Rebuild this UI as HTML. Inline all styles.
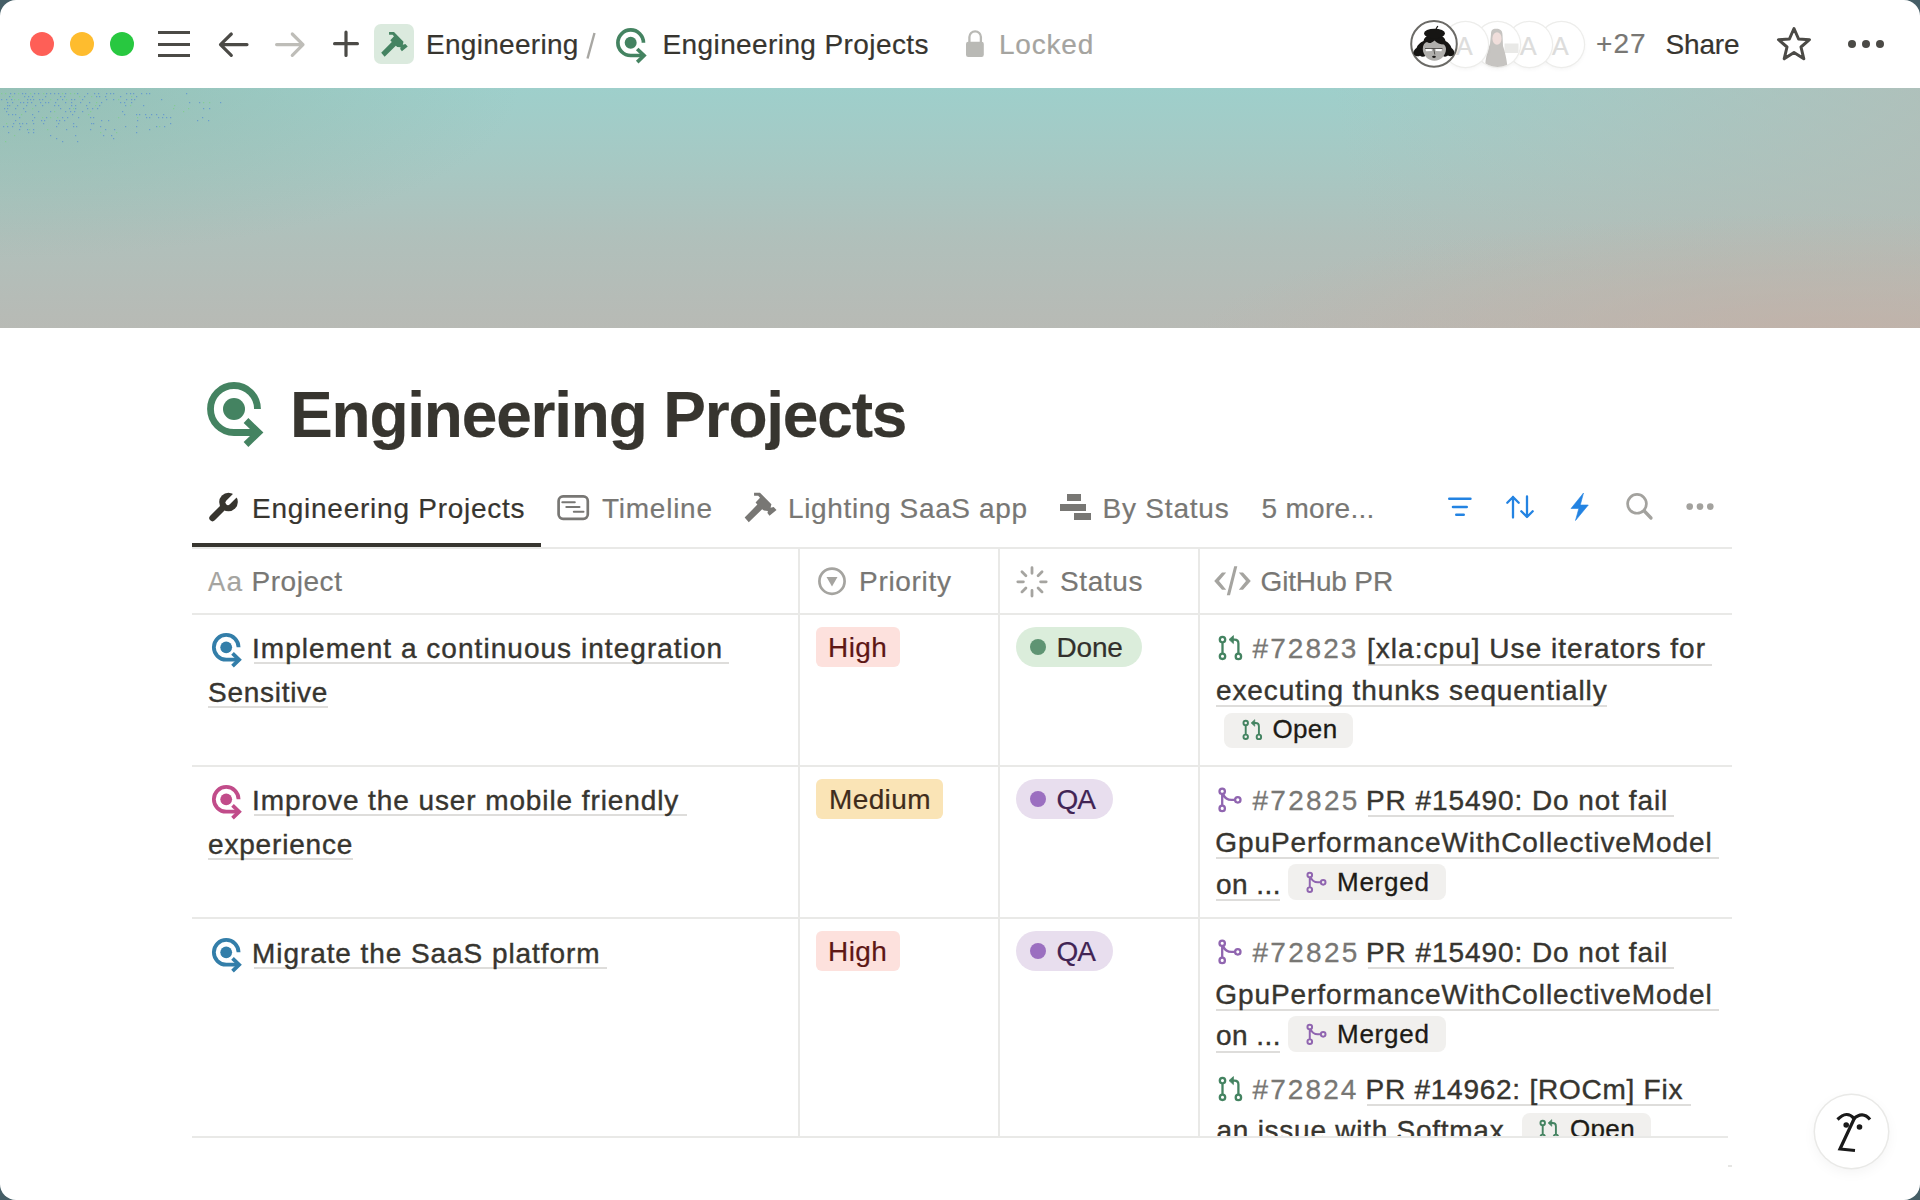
<!DOCTYPE html>
<html><head><meta charset="utf-8">
<style>
html,body{margin:0;padding:0;width:1920px;height:1200px;overflow:hidden;background:#455e66;}
body{font-family:"Liberation Sans",sans-serif;color:#37352f;}
.win{position:absolute;left:0;top:0;width:1920px;height:1200px;border-radius:16px;background:#fff;overflow:hidden;}
.a{position:absolute;}
.t{position:absolute;white-space:nowrap;font-size:28px;line-height:28px;-webkit-text-stroke:0.2px currentColor;}
svg{position:absolute;overflow:visible;}
.cover{position:absolute;left:0;top:88px;width:1920px;height:240px;
 background:
  radial-gradient(ellipse 650px 130px at 1840px 255px, rgba(196,176,166,0.85), rgba(196,176,166,0) 100%),
  radial-gradient(ellipse 520px 170px at 0px 0px, rgba(140,178,162,0.5), rgba(140,178,162,0) 100%),
  linear-gradient(260deg, rgba(180,188,182,0.75) 0%, rgba(180,188,182,0) 30%),
  linear-gradient(180deg,#9ecfcb 0%,#a6c9c4 30%,#b0c0bb 62%,#b8bab5 100%);}
.gl{position:absolute;background:#e9e9e7;}
.ul{position:absolute;height:2px;background:#dedddb;z-index:0;}
.row{z-index:1;}
.tag{position:absolute;height:40px;border-radius:6px;}
.pill{position:absolute;height:40px;border-radius:20px;}
.dot{position:absolute;width:16px;height:16px;border-radius:8px;}
.badge{position:absolute;height:36px;border-radius:8px;background:#f1f0ee;}
.row{font-size:28px;letter-spacing:0.9px;color:#37352f;-webkit-text-stroke:0.4px #37352f;}
.gray{color:#787774;}
</style></head>
<body><div class="win">

<!-- top bar -->
<div class="a" style="left:30px;top:32px;width:24px;height:24px;border-radius:12px;background:#fe5f57"></div>
<div class="a" style="left:70px;top:32px;width:24px;height:24px;border-radius:12px;background:#febc2e"></div>
<div class="a" style="left:110px;top:32px;width:24px;height:24px;border-radius:12px;background:#28c840"></div>

<div class="a" style="left:158px;top:31px;width:32px;height:3px;background:#4b4a46"></div>
<div class="a" style="left:158px;top:42.5px;width:32px;height:3px;background:#4b4a46"></div>
<div class="a" style="left:158px;top:54px;width:32px;height:3px;background:#4b4a46"></div>

<svg width="1920" height="88" style="left:0;top:0">
 <g fill="none" stroke-width="3.2" stroke-linecap="round" stroke-linejoin="round">
  <path d="M220.5 44.6 L247 44.6 M231.3 34 L220.5 44.6 L231.3 55.3" stroke="#4b4a46"/>
  <path d="M276.6 44.6 L303 44.6 M292.3 34 L303 44.6 L292.3 55.3" stroke="#bebdb8"/>
  <path d="M346 32.2 L346 55.4 M334.6 43.7 L357.4 43.7" stroke="#4b4a46"/>
 </g>
</svg>
<div class="a" style="left:374px;top:24px;width:40px;height:40px;border-radius:7px;background:#dbeade"></div>
<svg width="40" height="40" viewBox="0 0 40 40" style="left:374px;top:24px">
 <path d="M15.05 8.08 L20 8.08 L29.5 17.8 L28.8 20.7 L31.4 20 L33.75 22.4 L27.9 27.3 L26.2 25.1 L26.6 23.3 L23.3 22.9 L21.8 21.8 L10.65 32.65 L7.2 28.8 L17.8 18 L16.3 16.3 L20 12.3 L18.5 10.65 L15.05 10.65 Z" fill="#448361"/>
</svg>
<div class="t" style="left:426px;top:31px;letter-spacing:0.3px">Engineering</div>
<svg width="20" height="40" viewBox="0 0 20 40" style="left:580px;top:25px"><path d="M14.5 8 L7.5 33.5" stroke="#a8a7a3" stroke-width="2.4"/></svg>
<svg width="31" height="36" viewBox="0 0 57 66" style="left:616px;top:28px">
 <g fill="none" stroke="#448361" stroke-width="6.8">
  <path d="M50.5 27 A23.5 23.5 0 1 0 27 50.5 L51 50.5"/>
  <path d="M39 38.5 L51.5 50.5 L39 62.5" stroke-linejoin="miter"/>
 </g>
 <circle cx="27" cy="27" r="11" fill="#448361"/>
</svg>
<div class="t" style="left:662.5px;top:31px;letter-spacing:0.4px">Engineering Projects</div>
<svg width="20" height="28" viewBox="0 0 20 28" style="left:965px;top:30px">
 <path d="M4.4 12.5 V7.05 A5.75 5.75 0 0 1 15.9 7.05 V12.5" fill="none" stroke="#b9b9b5" stroke-width="2.3"/>
 <rect x="1" y="11.7" width="17.8" height="15.3" rx="2.2" fill="#b9b9b5"/>
</svg>
<div class="t" style="left:999px;top:31px;color:#a5a4a0;letter-spacing:0.8px">Locked</div>


<!-- avatars -->
<div class="a" style="left:1539px;top:21.5px;width:45px;height:45px;border-radius:50%;background:#fff;box-shadow:0 0 0 1.2px #ededeb,0 2px 5px rgba(0,0,0,0.05)"></div>
<div class="t" style="left:1552px;top:32px;font-size:25px;color:#dddddc">A</div>
<div class="a" style="left:1507px;top:21.5px;width:45px;height:45px;border-radius:50%;background:#fff;box-shadow:0 0 0 1.2px #ededeb,0 2px 5px rgba(0,0,0,0.05)"></div>
<div class="t" style="left:1520px;top:32px;font-size:25px;color:#dddddc">A</div>
<div class="a" style="left:1475px;top:21.5px;width:45px;height:45px;border-radius:50%;background:#fff;box-shadow:0 0 0 1.2px #ededeb,0 2px 5px rgba(0,0,0,0.05);overflow:hidden">
 <svg width="45" height="45" viewBox="0 0 45 45" style="left:0;top:0">
  <rect x="29.5" y="21.5" width="14" height="9.5" fill="#e9e9e7"/>
  <path d="M16 12 C16 7 19 6.8 21.5 6.8 C24.5 6.8 27.5 8 27.5 13 L28 24 C30 30 31.5 36 32.5 45 L10 45 C10.5 36 12.5 28 15 22 Z" fill="#c6c4c1"/>
  <ellipse cx="22" cy="16.5" rx="4.6" ry="6.2" fill="#f0dedb"/>
 </svg>
</div>
<div class="a" style="left:1443px;top:21.5px;width:45px;height:45px;border-radius:50%;background:#fff;box-shadow:0 0 0 1.2px #ededeb,0 2px 5px rgba(0,0,0,0.05)"></div>
<div class="t" style="left:1456px;top:32px;font-size:25px;color:#dddddc">A</div>
<svg width="50" height="50" viewBox="0 0 50 50" style="left:1409px;top:18.5px">
 <circle cx="25" cy="24.9" r="22.8" fill="#fff" stroke="#6b6a66" stroke-width="2"/>
 <path d="M5 35.5 C3.5 33 5.5 30.5 7.5 29 C8.5 26 11 23.5 14.5 22 C15 19 17 17.5 19 17 L32 17 C34.5 17.5 36 19.5 36.5 22 C39.5 23.5 41.5 26 42.5 29 C45 30.5 46 33.5 44.5 36 C43 37.5 40.5 37.5 39 36.5 C37.5 38 34.5 38 33 36.5 L17 36.5 C15 38 12.5 38 11 36.8 C9 37.8 6.5 37.5 5 35.5 Z" fill="#161513"/>
 <ellipse cx="25.5" cy="14.5" rx="10.5" ry="4.8" fill="#161513"/>
 <path d="M27 10 L28.8 7" stroke="#161513" stroke-width="1.3"/>
 <path d="M13.8 30 C13.8 26 15.5 23.5 18 23 C20 25 23 24 25.5 21.5 C28 24 31 25.5 35 25.5 C36.5 27 37 28.5 37 30 C37 36 32 41.8 25.5 41.8 C19 41.8 13.8 36 13.8 30 Z" fill="#b0afac"/>
 <path d="M16.5 30 L22.5 29.5 L23 32 L17 32.3 Z M26.5 29.5 L33 30 L32.5 32.3 L26.7 32 Z" fill="#fff"/>
 <path d="M16 29.5 L33.5 29.5 M24.8 30 L25.8 35.5" stroke="#2b2a27" stroke-width="0.7" fill="none"/>
 <ellipse cx="25" cy="37.8" rx="1.9" ry="1.1" fill="#161513"/>
</svg>
<div class="t gray" style="left:1596px;top:30px;letter-spacing:1.1px">+27</div>
<div class="t" style="left:1665.5px;top:30.5px;letter-spacing:-0.15px">Share</div>
<svg width="40" height="40" viewBox="0 0 40 40" style="left:1774px;top:24px">
 <path d="M20 4.5 L24.6 15 L35.5 15.7 L27 23 L29.8 34.8 L20 28.5 L10.2 34.8 L13 23 L4.5 15.7 L15.4 15 Z" fill="none" stroke="#4b4a46" stroke-width="3" stroke-linejoin="round"/>
</svg>
<div class="a" style="left:1847.5px;top:40px;width:8px;height:8px;border-radius:4px;background:#4b4a46"></div>
<div class="a" style="left:1861.5px;top:40px;width:8px;height:8px;border-radius:4px;background:#4b4a46"></div>
<div class="a" style="left:1875.5px;top:40px;width:8px;height:8px;border-radius:4px;background:#4b4a46"></div>

<!-- cover -->
<div class="cover"></div>
<!-- dots --><svg width="260" height="70" viewBox="0 0 260 70" style="left:0;top:88px;opacity:0.8"><rect x="1" y="5" width="1.2" height="1.2" fill="#7fcf8c"/><rect x="5" y="5" width="1.2" height="1.2" fill="#7fcf8c"/><rect x="10" y="5" width="1.2" height="1.2" fill="#5d92d2"/><rect x="14" y="5" width="1.2" height="1.2" fill="#5d92d2"/><rect x="18" y="5" width="1.2" height="1.2" fill="#7fcf8c"/><rect x="22" y="5" width="1.2" height="1.2" fill="#5d92d2"/><rect x="25" y="5" width="1.2" height="1.2" fill="#5d92d2"/><rect x="30" y="5" width="1.2" height="1.2" fill="#7fcf8c"/><rect x="34" y="5" width="1.2" height="1.2" fill="#5d92d2"/><rect x="38" y="5" width="1.2" height="1.2" fill="#5d92d2"/><rect x="43" y="5" width="1.2" height="1.2" fill="#7fcf8c"/><rect x="46" y="5" width="1.2" height="1.2" fill="#5d92d2"/><rect x="50" y="5" width="1.2" height="1.2" fill="#5d92d2"/><rect x="54" y="5" width="1.2" height="1.2" fill="#5d92d2"/><rect x="58" y="5" width="1.2" height="1.2" fill="#5d92d2"/><rect x="62" y="5" width="1.2" height="1.2" fill="#7fcf8c"/><rect x="65" y="5" width="1.2" height="1.2" fill="#5d92d2"/><rect x="70" y="5" width="1.2" height="1.2" fill="#7fcf8c"/><rect x="74" y="5" width="1.2" height="1.2" fill="#7fcf8c"/><rect x="77" y="5" width="1.2" height="1.2" fill="#5d92d2"/><rect x="87" y="5" width="1.2" height="1.2" fill="#5d92d2"/><rect x="94" y="5" width="1.2" height="1.2" fill="#5d92d2"/><rect x="98" y="5" width="1.2" height="1.2" fill="#5d92d2"/><rect x="106" y="5" width="1.2" height="1.2" fill="#5d92d2"/><rect x="110" y="5" width="1.2" height="1.2" fill="#5d92d2"/><rect x="113" y="5" width="1.2" height="1.2" fill="#5d92d2"/><rect x="126" y="5" width="1.2" height="1.2" fill="#5d92d2"/><rect x="130" y="5" width="1.2" height="1.2" fill="#5d92d2"/><rect x="133" y="5" width="1.2" height="1.2" fill="#5d92d2"/><rect x="141" y="5" width="1.2" height="1.2" fill="#5d92d2"/><rect x="146" y="5" width="1.2" height="1.2" fill="#5d92d2"/><rect x="149" y="5" width="1.2" height="1.2" fill="#5d92d2"/><rect x="186" y="5" width="1.2" height="1.2" fill="#5d92d2"/><rect x="9" y="8" width="1.2" height="1.2" fill="#5d92d2"/><rect x="12" y="8" width="1.2" height="1.2" fill="#7fcf8c"/><rect x="24" y="8" width="1.2" height="1.2" fill="#5d92d2"/><rect x="28" y="8" width="1.2" height="1.2" fill="#5d92d2"/><rect x="32" y="8" width="1.2" height="1.2" fill="#5d92d2"/><rect x="45" y="8" width="1.2" height="1.2" fill="#5d92d2"/><rect x="60" y="8" width="1.2" height="1.2" fill="#5d92d2"/><rect x="64" y="8" width="1.2" height="1.2" fill="#5d92d2"/><rect x="79" y="8" width="1.2" height="1.2" fill="#7fcf8c"/><rect x="84" y="8" width="1.2" height="1.2" fill="#5d92d2"/><rect x="91" y="8" width="1.2" height="1.2" fill="#7fcf8c"/><rect x="96" y="8" width="1.2" height="1.2" fill="#5d92d2"/><rect x="99" y="8" width="1.2" height="1.2" fill="#5d92d2"/><rect x="105" y="8" width="1.2" height="1.2" fill="#5d92d2"/><rect x="120" y="8" width="1.2" height="1.2" fill="#5d92d2"/><rect x="131" y="8" width="1.2" height="1.2" fill="#7fcf8c"/><rect x="136" y="8" width="1.2" height="1.2" fill="#5d92d2"/><rect x="1" y="11" width="1.2" height="1.2" fill="#5d92d2"/><rect x="6" y="11" width="1.2" height="1.2" fill="#5d92d2"/><rect x="11" y="11" width="1.2" height="1.2" fill="#5d92d2"/><rect x="14" y="11" width="1.2" height="1.2" fill="#7fcf8c"/><rect x="18" y="11" width="1.2" height="1.2" fill="#7fcf8c"/><rect x="27" y="11" width="1.2" height="1.2" fill="#5d92d2"/><rect x="30" y="11" width="1.2" height="1.2" fill="#5d92d2"/><rect x="33" y="11" width="1.2" height="1.2" fill="#5d92d2"/><rect x="39" y="11" width="1.2" height="1.2" fill="#5d92d2"/><rect x="42" y="11" width="1.2" height="1.2" fill="#5d92d2"/><rect x="50" y="11" width="1.2" height="1.2" fill="#7fcf8c"/><rect x="57" y="11" width="1.2" height="1.2" fill="#5d92d2"/><rect x="62" y="11" width="1.2" height="1.2" fill="#5d92d2"/><rect x="66" y="11" width="1.2" height="1.2" fill="#7fcf8c"/><rect x="71" y="11" width="1.2" height="1.2" fill="#5d92d2"/><rect x="74" y="11" width="1.2" height="1.2" fill="#5d92d2"/><rect x="82" y="11" width="1.2" height="1.2" fill="#5d92d2"/><rect x="106" y="11" width="1.2" height="1.2" fill="#5d92d2"/><rect x="113" y="11" width="1.2" height="1.2" fill="#5d92d2"/><rect x="118" y="11" width="1.2" height="1.2" fill="#7fcf8c"/><rect x="126" y="11" width="1.2" height="1.2" fill="#5d92d2"/><rect x="131" y="11" width="1.2" height="1.2" fill="#5d92d2"/><rect x="134" y="11" width="1.2" height="1.2" fill="#5d92d2"/><rect x="161" y="11" width="1.2" height="1.2" fill="#5d92d2"/><rect x="7" y="14" width="1.2" height="1.2" fill="#5d92d2"/><rect x="12" y="14" width="1.2" height="1.2" fill="#5d92d2"/><rect x="20" y="14" width="1.2" height="1.2" fill="#5d92d2"/><rect x="23" y="14" width="1.2" height="1.2" fill="#5d92d2"/><rect x="27" y="14" width="1.2" height="1.2" fill="#5d92d2"/><rect x="31" y="14" width="1.2" height="1.2" fill="#5d92d2"/><rect x="40" y="14" width="1.2" height="1.2" fill="#5d92d2"/><rect x="45" y="14" width="1.2" height="1.2" fill="#5d92d2"/><rect x="48" y="14" width="1.2" height="1.2" fill="#5d92d2"/><rect x="55" y="14" width="1.2" height="1.2" fill="#5d92d2"/><rect x="65" y="14" width="1.2" height="1.2" fill="#5d92d2"/><rect x="71" y="14" width="1.2" height="1.2" fill="#5d92d2"/><rect x="80" y="14" width="1.2" height="1.2" fill="#5d92d2"/><rect x="89" y="14" width="1.2" height="1.2" fill="#5d92d2"/><rect x="96" y="14" width="1.2" height="1.2" fill="#7fcf8c"/><rect x="101" y="14" width="1.2" height="1.2" fill="#5d92d2"/><rect x="120" y="14" width="1.2" height="1.2" fill="#5d92d2"/><rect x="124" y="14" width="1.2" height="1.2" fill="#5d92d2"/><rect x="131" y="14" width="1.2" height="1.2" fill="#5d92d2"/><rect x="189" y="14" width="1.2" height="1.2" fill="#5d92d2"/><rect x="199" y="14" width="1.2" height="1.2" fill="#5d92d2"/><rect x="203" y="14" width="1.2" height="1.2" fill="#7fcf8c"/><rect x="209" y="14" width="1.2" height="1.2" fill="#7fcf8c"/><rect x="220" y="14" width="1.2" height="1.2" fill="#5d92d2"/><rect x="7" y="17" width="1.2" height="1.2" fill="#5d92d2"/><rect x="9" y="17" width="1.2" height="1.2" fill="#5d92d2"/><rect x="17" y="17" width="1.2" height="1.2" fill="#5d92d2"/><rect x="26" y="17" width="1.2" height="1.2" fill="#5d92d2"/><rect x="35" y="17" width="1.2" height="1.2" fill="#5d92d2"/><rect x="42" y="17" width="1.2" height="1.2" fill="#5d92d2"/><rect x="54" y="17" width="1.2" height="1.2" fill="#5d92d2"/><rect x="58" y="17" width="1.2" height="1.2" fill="#5d92d2"/><rect x="71" y="17" width="1.2" height="1.2" fill="#5d92d2"/><rect x="75" y="17" width="1.2" height="1.2" fill="#5d92d2"/><rect x="86" y="17" width="1.2" height="1.2" fill="#5d92d2"/><rect x="95" y="17" width="1.2" height="1.2" fill="#7fcf8c"/><rect x="99" y="17" width="1.2" height="1.2" fill="#5d92d2"/><rect x="125" y="17" width="1.2" height="1.2" fill="#5d92d2"/><rect x="130" y="17" width="1.2" height="1.2" fill="#7fcf8c"/><rect x="143" y="17" width="1.2" height="1.2" fill="#5d92d2"/><rect x="174" y="17" width="1.2" height="1.2" fill="#7fcf8c"/><rect x="4" y="20" width="1.2" height="1.2" fill="#5d92d2"/><rect x="7" y="20" width="1.2" height="1.2" fill="#5d92d2"/><rect x="15" y="20" width="1.2" height="1.2" fill="#5d92d2"/><rect x="23" y="20" width="1.2" height="1.2" fill="#5d92d2"/><rect x="32" y="20" width="1.2" height="1.2" fill="#7fcf8c"/><rect x="60" y="20" width="1.2" height="1.2" fill="#5d92d2"/><rect x="69" y="20" width="1.2" height="1.2" fill="#5d92d2"/><rect x="73" y="20" width="1.2" height="1.2" fill="#7fcf8c"/><rect x="75" y="20" width="1.2" height="1.2" fill="#5d92d2"/><rect x="87" y="20" width="1.2" height="1.2" fill="#5d92d2"/><rect x="92" y="20" width="1.2" height="1.2" fill="#5d92d2"/><rect x="97" y="20" width="1.2" height="1.2" fill="#5d92d2"/><rect x="173" y="20" width="1.2" height="1.2" fill="#7fcf8c"/><rect x="188" y="20" width="1.2" height="1.2" fill="#7fcf8c"/><rect x="203" y="20" width="1.2" height="1.2" fill="#5d92d2"/><rect x="209" y="20" width="1.2" height="1.2" fill="#5d92d2"/><rect x="6" y="23" width="1.2" height="1.2" fill="#5d92d2"/><rect x="25" y="23" width="1.2" height="1.2" fill="#5d92d2"/><rect x="38" y="23" width="1.2" height="1.2" fill="#5d92d2"/><rect x="50" y="23" width="1.2" height="1.2" fill="#5d92d2"/><rect x="54" y="23" width="1.2" height="1.2" fill="#7fcf8c"/><rect x="65" y="23" width="1.2" height="1.2" fill="#5d92d2"/><rect x="70" y="23" width="1.2" height="1.2" fill="#5d92d2"/><rect x="74" y="23" width="1.2" height="1.2" fill="#5d92d2"/><rect x="82" y="23" width="1.2" height="1.2" fill="#5d92d2"/><rect x="90" y="23" width="1.2" height="1.2" fill="#7fcf8c"/><rect x="122" y="23" width="1.2" height="1.2" fill="#5d92d2"/><rect x="183" y="23" width="1.2" height="1.2" fill="#7fcf8c"/><rect x="8" y="26" width="1.2" height="1.2" fill="#5d92d2"/><rect x="12" y="26" width="1.2" height="1.2" fill="#5d92d2"/><rect x="15" y="26" width="1.2" height="1.2" fill="#5d92d2"/><rect x="21" y="26" width="1.2" height="1.2" fill="#7fcf8c"/><rect x="32" y="26" width="1.2" height="1.2" fill="#5d92d2"/><rect x="72" y="26" width="1.2" height="1.2" fill="#5d92d2"/><rect x="88" y="26" width="1.2" height="1.2" fill="#7fcf8c"/><rect x="124" y="26" width="1.2" height="1.2" fill="#5d92d2"/><rect x="136" y="26" width="1.2" height="1.2" fill="#5d92d2"/><rect x="139" y="26" width="1.2" height="1.2" fill="#5d92d2"/><rect x="145" y="26" width="1.2" height="1.2" fill="#5d92d2"/><rect x="151" y="26" width="1.2" height="1.2" fill="#5d92d2"/><rect x="156" y="26" width="1.2" height="1.2" fill="#5d92d2"/><rect x="163" y="26" width="1.2" height="1.2" fill="#5d92d2"/><rect x="19" y="29" width="1.2" height="1.2" fill="#5d92d2"/><rect x="34" y="29" width="1.2" height="1.2" fill="#5d92d2"/><rect x="42" y="29" width="1.2" height="1.2" fill="#7fcf8c"/><rect x="46" y="29" width="1.2" height="1.2" fill="#5d92d2"/><rect x="50" y="29" width="1.2" height="1.2" fill="#7fcf8c"/><rect x="57" y="29" width="1.2" height="1.2" fill="#7fcf8c"/><rect x="62" y="29" width="1.2" height="1.2" fill="#5d92d2"/><rect x="67" y="29" width="1.2" height="1.2" fill="#5d92d2"/><rect x="78" y="29" width="1.2" height="1.2" fill="#5d92d2"/><rect x="90" y="29" width="1.2" height="1.2" fill="#5d92d2"/><rect x="93" y="29" width="1.2" height="1.2" fill="#5d92d2"/><rect x="118" y="29" width="1.2" height="1.2" fill="#7fcf8c"/><rect x="137" y="29" width="1.2" height="1.2" fill="#7fcf8c"/><rect x="146" y="29" width="1.2" height="1.2" fill="#5d92d2"/><rect x="149" y="29" width="1.2" height="1.2" fill="#5d92d2"/><rect x="158" y="29" width="1.2" height="1.2" fill="#5d92d2"/><rect x="162" y="29" width="1.2" height="1.2" fill="#5d92d2"/><rect x="166" y="29" width="1.2" height="1.2" fill="#5d92d2"/><rect x="170" y="29" width="1.2" height="1.2" fill="#5d92d2"/><rect x="202" y="29" width="1.2" height="1.2" fill="#5d92d2"/><rect x="15" y="32" width="1.2" height="1.2" fill="#5d92d2"/><rect x="32" y="32" width="1.2" height="1.2" fill="#5d92d2"/><rect x="41" y="32" width="1.2" height="1.2" fill="#5d92d2"/><rect x="44" y="32" width="1.2" height="1.2" fill="#5d92d2"/><rect x="56" y="32" width="1.2" height="1.2" fill="#5d92d2"/><rect x="59" y="32" width="1.2" height="1.2" fill="#5d92d2"/><rect x="64" y="32" width="1.2" height="1.2" fill="#5d92d2"/><rect x="101" y="32" width="1.2" height="1.2" fill="#5d92d2"/><rect x="108" y="32" width="1.2" height="1.2" fill="#5d92d2"/><rect x="137" y="32" width="1.2" height="1.2" fill="#5d92d2"/><rect x="197" y="32" width="1.2" height="1.2" fill="#5d92d2"/><rect x="208" y="32" width="1.2" height="1.2" fill="#5d92d2"/><rect x="6" y="35" width="1.2" height="1.2" fill="#7fcf8c"/><rect x="13" y="35" width="1.2" height="1.2" fill="#5d92d2"/><rect x="19" y="35" width="1.2" height="1.2" fill="#5d92d2"/><rect x="22" y="35" width="1.2" height="1.2" fill="#5d92d2"/><rect x="26" y="35" width="1.2" height="1.2" fill="#5d92d2"/><rect x="33" y="35" width="1.2" height="1.2" fill="#5d92d2"/><rect x="43" y="35" width="1.2" height="1.2" fill="#5d92d2"/><rect x="58" y="35" width="1.2" height="1.2" fill="#5d92d2"/><rect x="73" y="35" width="1.2" height="1.2" fill="#5d92d2"/><rect x="91" y="35" width="1.2" height="1.2" fill="#5d92d2"/><rect x="93" y="35" width="1.2" height="1.2" fill="#5d92d2"/><rect x="170" y="35" width="1.2" height="1.2" fill="#5d92d2"/><rect x="3" y="38" width="1.2" height="1.2" fill="#5d92d2"/><rect x="7" y="38" width="1.2" height="1.2" fill="#5d92d2"/><rect x="12" y="38" width="1.2" height="1.2" fill="#5d92d2"/><rect x="20" y="38" width="1.2" height="1.2" fill="#5d92d2"/><rect x="56" y="38" width="1.2" height="1.2" fill="#5d92d2"/><rect x="73" y="38" width="1.2" height="1.2" fill="#5d92d2"/><rect x="76" y="38" width="1.2" height="1.2" fill="#5d92d2"/><rect x="100" y="38" width="1.2" height="1.2" fill="#5d92d2"/><rect x="125" y="38" width="1.2" height="1.2" fill="#5d92d2"/><rect x="136" y="38" width="1.2" height="1.2" fill="#5d92d2"/><rect x="156" y="38" width="1.2" height="1.2" fill="#5d92d2"/><rect x="159" y="38" width="1.2" height="1.2" fill="#7fcf8c"/><rect x="164" y="38" width="1.2" height="1.2" fill="#5d92d2"/><rect x="19" y="41" width="1.2" height="1.2" fill="#5d92d2"/><rect x="27" y="41" width="1.2" height="1.2" fill="#5d92d2"/><rect x="29" y="41" width="1.2" height="1.2" fill="#7fcf8c"/><rect x="33" y="41" width="1.2" height="1.2" fill="#5d92d2"/><rect x="47" y="41" width="1.2" height="1.2" fill="#7fcf8c"/><rect x="66" y="41" width="1.2" height="1.2" fill="#5d92d2"/><rect x="90" y="41" width="1.2" height="1.2" fill="#5d92d2"/><rect x="105" y="41" width="1.2" height="1.2" fill="#5d92d2"/><rect x="114" y="41" width="1.2" height="1.2" fill="#5d92d2"/><rect x="149" y="41" width="1.2" height="1.2" fill="#5d92d2"/><rect x="8" y="44" width="1.2" height="1.2" fill="#5d92d2"/><rect x="28" y="44" width="1.2" height="1.2" fill="#5d92d2"/><rect x="33" y="44" width="1.2" height="1.2" fill="#5d92d2"/><rect x="100" y="44" width="1.2" height="1.2" fill="#7fcf8c"/><rect x="116" y="44" width="1.2" height="1.2" fill="#7fcf8c"/><rect x="136" y="44" width="1.2" height="1.2" fill="#5d92d2"/><rect x="14" y="47" width="1.2" height="1.2" fill="#7fcf8c"/><rect x="50" y="47" width="1.2" height="1.2" fill="#5d92d2"/><rect x="75" y="47" width="1.2" height="1.2" fill="#5d92d2"/><rect x="103" y="47" width="1.2" height="1.2" fill="#5d92d2"/><rect x="111" y="47" width="1.2" height="1.2" fill="#5d92d2"/><rect x="56" y="50" width="1.2" height="1.2" fill="#5d92d2"/><rect x="113" y="50" width="1.2" height="1.2" fill="#5d92d2"/><rect x="5" y="53" width="1.2" height="1.2" fill="#7fcf8c"/><rect x="62" y="53" width="1.2" height="1.2" fill="#5d92d2"/><rect x="77" y="53" width="1.2" height="1.2" fill="#5d92d2"/></svg><!-- /dots -->

<!-- title -->
<svg width="57" height="66" viewBox="0 0 57 66" style="left:207px;top:382px">
 <g fill="none" stroke="#448361" stroke-width="6.8">
  <path d="M50.5 27 A23.5 23.5 0 1 0 27 50.5 L51 50.5"/>
  <path d="M39 38.5 L51.5 50.5 L39 62.5" stroke-linejoin="miter"/>
 </g>
 <circle cx="27" cy="27" r="11" fill="#448361"/>
</svg>
<div class="t" style="left:290px;top:383px;font-size:64px;line-height:64px;font-weight:bold;letter-spacing:-1.2px;color:#37352f">Engineering Projects</div>


<!-- tabs -->
<svg width="40" height="40" viewBox="0 0 40 40" style="left:204px;top:488px">
 <circle cx="24.5" cy="14" r="9.3" fill="#37352f"/>
 <path d="M24 14.5 L35 3.5" stroke="#fff" stroke-width="5.2" stroke-linecap="round"/>
 <path d="M8.5 30 L19 19.5" stroke="#37352f" stroke-width="6.4" stroke-linecap="round"/>
</svg>
<div class="t" style="left:252px;top:495px;letter-spacing:0.75px">Engineering Projects</div>
<div class="a" style="left:192px;top:543px;width:349px;height:4px;background:#37352f"></div>
<div class="a" style="left:192px;top:547px;width:1540px;height:2px;background:#e9e9e7"></div>

<svg width="40" height="40" viewBox="0 0 40 40" style="left:550px;top:488px">
 <rect x="8.6" y="8.4" width="29.2" height="22.4" rx="4.5" fill="none" stroke="#787774" stroke-width="2.7"/>
 <path d="M12.3 14.3 H24.8 M16.3 19 H29.5 M23.8 23.7 H33.5" stroke="#787774" stroke-width="2" stroke-linecap="round"/>
</svg>
<div class="t gray" style="left:602px;top:495px;letter-spacing:0.75px">Timeline</div>

<svg width="48" height="48" viewBox="0 0 40 40" style="left:736px;top:482.5px">
 <path d="M15.05 8.08 L20 8.08 L29.5 17.8 L28.8 20.7 L31.4 20 L33.75 22.4 L27.9 27.3 L26.2 25.1 L26.6 23.3 L23.3 22.9 L21.8 21.8 L10.65 32.65 L7.2 28.8 L17.8 18 L16.3 16.3 L20 12.3 L18.5 10.65 L15.05 10.65 Z" fill="#787774"/>
</svg>
<div class="t gray" style="left:788px;top:495px;letter-spacing:0.64px">Lighting SaaS app</div>

<div class="a" style="left:1067px;top:494px;width:14px;height:6.5px;background:#787774"></div>
<div class="a" style="left:1060px;top:504px;width:25.5px;height:6.5px;background:#787774"></div>
<div class="a" style="left:1074px;top:513.3px;width:16.7px;height:6.5px;background:#787774"></div>
<div class="t gray" style="left:1102.5px;top:495px;letter-spacing:0.8px">By Status</div>
<div class="t gray" style="left:1261.5px;top:495px;letter-spacing:0.3px">5 more...</div>

<svg width="300" height="40" viewBox="0 0 300 40" style="left:1440px;top:488px">
 <g stroke="#2383e2" stroke-linecap="round" fill="none">
  <path d="M9.3 10.8 H30.4 M13 19 H26.7 M16.3 26.7 H23.7" stroke-width="2.6"/>
  <path d="M73 9 V29.5 M67.3 14.8 L73 9 L78.7 14.8 M87 8.5 V29 M81.3 23.2 L87 29 L92.7 23.2" stroke-width="2.3" stroke-linejoin="round"/>
 </g>
 <path d="M143.5 5 L131 20.5 L138.8 20.5 L135.5 32.5 L148.3 17 L140.3 17 Z" fill="#2383e2" stroke="#2383e2" stroke-width="0.6" stroke-linejoin="round"/>
 <g stroke="#a3a29e" fill="none">
  <circle cx="197" cy="15.85" r="9.4" stroke-width="2.7"/>
  <path d="M204.3 23 L211 30" stroke-width="3.3" stroke-linecap="round"/>
 </g>
 <circle cx="249.7" cy="18.6" r="3.3" fill="#a3a29e"/>
 <circle cx="260" cy="18.6" r="3.3" fill="#a3a29e"/>
 <circle cx="270.3" cy="18.6" r="3.3" fill="#a3a29e"/>
</svg>


<div class="a" style="left:1728px;top:1165px;width:4px;height:2px;background:#e6e6e4"></div>
<!-- table -->
<div class="gl" style="left:798px;top:549px;width:2px;height:587px"></div>
<div class="gl" style="left:998px;top:549px;width:2px;height:587px"></div>
<div class="gl" style="left:1198px;top:549px;width:2px;height:587px"></div>
<div class="gl" style="left:192px;top:613px;width:1540px;height:2px"></div>
<div class="gl" style="left:192px;top:765px;width:1540px;height:2px"></div>
<div class="gl" style="left:192px;top:917px;width:1540px;height:2px"></div>
<div class="t" style="left:207.5px;top:568px;color:#a5a4a0;transform:scaleX(0.92);transform-origin:0 0">A</div>
<div class="t" style="left:226.5px;top:568px;color:#a5a4a0;">a</div>
<div class="t gray" style="left:251.5px;top:568px;letter-spacing:0.55px">Project</div>
<svg width="40" height="40" viewBox="0 0 40 40" style="left:812px;top:561px">
 <circle cx="20" cy="20.2" r="12.6" fill="none" stroke="#a5a4a0" stroke-width="2.7"/>
 <path d="M14.5 16 H25.5 L20 25.5 Z" fill="#a5a4a0"/>
</svg>
<div class="t gray" style="left:859px;top:568px;letter-spacing:0.7px">Priority</div>
<svg width="40" height="40" viewBox="0 0 40 40" style="left:1011px;top:561px">
 <path d="M29.60 20.85 L35.20 20.85 M27.08 26.93 L31.04 30.89 M21.00 29.45 L21.00 35.05 M14.92 26.93 L10.96 30.89 M12.40 20.85 L6.80 20.85 M14.92 14.77 L10.96 10.81 M21.00 12.25 L21.00 6.65 M27.08 14.77 L31.04 10.81" stroke="#a5a4a0" stroke-width="2.8" stroke-linecap="round"/>
</svg>
<div class="t gray" style="left:1060px;top:568px;letter-spacing:0.6px">Status</div>
<svg width="48" height="40" viewBox="0 0 48 40" style="left:1208px;top:561px">
 <path d="M14 11.5 L18.2 11.5 L11 20 L18.2 28.7 L14 28.7 L6.2 20 Z M35 11.5 L30.8 11.5 L38 20 L30.8 28.7 L35 28.7 L42.8 20 Z M26.2 5.3 L29.3 5.3 L22 34.3 L18.8 34.3 Z" fill="#a5a4a0"/>
</svg>
<div class="t gray" style="left:1260.5px;top:568px;letter-spacing:-0.15px">GitHub PR</div>
<svg width="30" height="35" viewBox="0 0 57 66" style="left:211.65px;top:633.05px">
 <g fill="none" stroke="#337ea9" stroke-width="7.2">
  <path d="M50.5 27 A23.5 23.5 0 1 0 27 50.5 L51 50.5"/>
  <path d="M39 38.5 L51.5 50.5 L39 62.5" stroke-linejoin="miter"/>
 </g>
 <circle cx="27" cy="27" r="11.2" fill="#337ea9"/>
</svg>
<div class="t row" style="left:252px;top:635px;letter-spacing:1.04px;">Implement a continuous integration</div>
<div class="ul" style="left:254px;top:662px;width:475px"></div>
<div class="t row" style="left:208px;top:678.5px;letter-spacing:0.72px;">Sensitive</div>
<div class="ul" style="left:208px;top:706px;width:120px"></div>
<div class="tag" style="left:816px;top:627px;width:84px;background:#fde1dd"></div>
<div class="t" style="left:828px;top:634px;color:#5d1715;letter-spacing:0.45px">High</div>
<div class="pill" style="left:1016px;top:627px;width:126px;background:#dbeddb"></div>
<div class="dot" style="left:1030px;top:639px;background:#5f9473"></div>
<div class="t" style="left:1056.5px;top:634px;color:#32302c;letter-spacing:-0.2px">Done</div>
<svg width="36.00" height="36.00" viewBox="0 0 36 36" style="left:1212px;top:630px">
 <g fill="none" stroke="#448361" stroke-width="2.3">
  <circle cx="10.5" cy="9.6" r="2.7"/><circle cx="10.5" cy="26.3" r="2.7"/><circle cx="26.4" cy="26.4" r="2.7"/>
  <path d="M10.5 12.3 V23.6 M26.4 23.7 V13.5 Q26.4 9.6 22.5 9.6 H19.5"/>
 </g>
 <path d="M17 9.6 L21.4 5.6 L21.4 13.6 Z" fill="#448361" stroke="#448361" stroke-width="0.8" stroke-linejoin="round"/>
</svg>
<div class="t row gray" style="left:1252.5px;top:635px;letter-spacing:2.1px;-webkit-text-stroke:0.3px #787774;">#72823</div>
<div class="t row" style="left:1367px;top:635px;letter-spacing:1.03px;">[xla:cpu] Use iterators for</div>
<div class="ul" style="left:1368px;top:663.5px;width:344px"></div>
<div class="t row" style="left:1216px;top:676.5px;letter-spacing:0.89px;">executing thunks sequentially</div>
<div class="ul" style="left:1216px;top:705px;width:391px"></div>
<div class="badge" style="left:1224px;top:712.5px;width:129px;height:35px"></div>
<svg width="29.88" height="29.88" viewBox="0 0 36 36" style="left:1236.6px;top:714.8px">
 <g fill="none" stroke="#448361" stroke-width="2.3">
  <circle cx="10.5" cy="9.6" r="2.7"/><circle cx="10.5" cy="26.3" r="2.7"/><circle cx="26.4" cy="26.4" r="2.7"/>
  <path d="M10.5 12.3 V23.6 M26.4 23.7 V13.5 Q26.4 9.6 22.5 9.6 H19.5"/>
 </g>
 <path d="M17 9.6 L21.4 5.6 L21.4 13.6 Z" fill="#448361" stroke="#448361" stroke-width="0.8" stroke-linejoin="round"/>
</svg>
<div class="t" style="left:1272.4px;top:716.2px;font-size:26px;line-height:26px;color:#1d1b16;letter-spacing:0.4px;-webkit-text-stroke:0.3px #1d1b16">Open</div>
<svg width="30" height="35" viewBox="0 0 57 66" style="left:211.65px;top:785.3px">
 <g fill="none" stroke="#c14c8a" stroke-width="7.2">
  <path d="M50.5 27 A23.5 23.5 0 1 0 27 50.5 L51 50.5"/>
  <path d="M39 38.5 L51.5 50.5 L39 62.5" stroke-linejoin="miter"/>
 </g>
 <circle cx="27" cy="27" r="11.2" fill="#c14c8a"/>
</svg>
<div class="t row" style="left:252px;top:787px;letter-spacing:0.9px;">Improve the user mobile friendly</div>
<div class="ul" style="left:254px;top:814px;width:433px"></div>
<div class="t row" style="left:208px;top:831px;letter-spacing:0.82px;">experience</div>
<div class="ul" style="left:208px;top:858px;width:145px"></div>
<div class="tag" style="left:816px;top:779px;width:127px;background:#fae4b6"></div>
<div class="t" style="left:829px;top:786px;color:#402c1b;letter-spacing:0.38px">Medium</div>
<div class="pill" style="left:1016px;top:779px;width:97px;background:#e8deee"></div>
<div class="dot" style="left:1030px;top:791px;background:#9b6fc0"></div>
<div class="t" style="left:1056.5px;top:786px;color:#412454;letter-spacing:-1px">QA</div>
<svg width="36.00" height="36.00" viewBox="0 0 36 36" style="left:1212px;top:782px">
 <g fill="none" stroke="#9065b0" stroke-width="2.3">
  <circle cx="10.2" cy="9.3" r="2.7"/><circle cx="10.2" cy="26.4" r="2.7"/><circle cx="25.8" cy="17.85" r="2.7"/>
  <path d="M10.2 12 V23.7 M11.2 12.2 Q13.5 17.85 19.5 17.85 H23.1"/>
 </g>
</svg>
<div class="t row gray" style="left:1252.5px;top:787px;letter-spacing:2.3px;-webkit-text-stroke:0.3px #787774;">#72825</div>
<div class="t row" style="left:1366px;top:787px;letter-spacing:0.93px;">PR #15490: Do not fail</div>
<div class="ul" style="left:1368px;top:815px;width:306px"></div>
<div class="t row" style="left:1215.2px;top:829px;letter-spacing:0.93px;">GpuPerformanceWithCollectiveModel</div>
<div class="ul" style="left:1216px;top:857px;width:503px"></div>
<div class="t row" style="left:1216px;top:870.5px;letter-spacing:0.45px;">on ...</div>
<div class="ul" style="left:1216px;top:899px;width:64px"></div>
<div class="badge" style="left:1288px;top:864px;width:158px;height:36px"></div>
<svg width="30.96" height="30.96" viewBox="0 0 36 36" style="left:1300.7px;top:866.5px">
 <g fill="none" stroke="#9065b0" stroke-width="2.3">
  <circle cx="10.2" cy="9.3" r="2.7"/><circle cx="10.2" cy="26.4" r="2.7"/><circle cx="25.8" cy="17.85" r="2.7"/>
  <path d="M10.2 12 V23.7 M11.2 12.2 Q13.5 17.85 19.5 17.85 H23.1"/>
 </g>
</svg>
<div class="t" style="left:1337px;top:868.5px;font-size:26px;line-height:26px;color:#1d1b16;letter-spacing:0.75px;-webkit-text-stroke:0.3px #1d1b16">Merged</div>
<div class="a" style="left:0;top:919px;width:1920px;height:217px;overflow:hidden">
<svg width="30" height="35" viewBox="0 0 57 66" style="left:211.65px;top:18.50px">
 <g fill="none" stroke="#337ea9" stroke-width="7.2">
  <path d="M50.5 27 A23.5 23.5 0 1 0 27 50.5 L51 50.5"/>
  <path d="M39 38.5 L51.5 50.5 L39 62.5" stroke-linejoin="miter"/>
 </g>
 <circle cx="27" cy="27" r="11.2" fill="#337ea9"/>
</svg>
<div class="t row" style="left:252px;top:20.50px;letter-spacing:0.93px;">Migrate the SaaS platform</div>
<div class="ul" style="left:254px;top:47.50px;width:353px"></div>
<div class="tag" style="left:816px;top:12.00px;width:84px;background:#fde1dd"></div>
<div class="t" style="left:828px;top:19.00px;color:#5d1715;letter-spacing:0.45px">High</div>
<div class="pill" style="left:1016px;top:12.00px;width:97px;background:#e8deee"></div>
<div class="dot" style="left:1030px;top:24.00px;background:#9b6fc0"></div>
<div class="t" style="left:1056.5px;top:19.00px;color:#412454;letter-spacing:-1px">QA</div>
<svg width="36.00" height="36.00" viewBox="0 0 36 36" style="left:1212px;top:15.00px">
 <g fill="none" stroke="#9065b0" stroke-width="2.3">
  <circle cx="10.2" cy="9.3" r="2.7"/><circle cx="10.2" cy="26.4" r="2.7"/><circle cx="25.8" cy="17.85" r="2.7"/>
  <path d="M10.2 12 V23.7 M11.2 12.2 Q13.5 17.85 19.5 17.85 H23.1"/>
 </g>
</svg>
<div class="t row gray" style="left:1252.5px;top:20.00px;letter-spacing:2.3px;-webkit-text-stroke:0.3px #787774;">#72825</div>
<div class="t row" style="left:1366px;top:20.00px;letter-spacing:0.93px;">PR #15490: Do not fail</div>
<div class="ul" style="left:1368px;top:48.00px;width:306px"></div>
<div class="t row" style="left:1215.2px;top:61.50px;letter-spacing:0.93px;">GpuPerformanceWithCollectiveModel</div>
<div class="ul" style="left:1216px;top:90.00px;width:503px"></div>
<div class="t row" style="left:1216px;top:103.00px;letter-spacing:0.45px;">on ...</div>
<div class="ul" style="left:1216px;top:132.00px;width:64px"></div>
<div class="badge" style="left:1288px;top:97.00px;width:158px;height:36px"></div>
<svg width="30.96" height="30.96" viewBox="0 0 36 36" style="left:1300.7px;top:99.50px">
 <g fill="none" stroke="#9065b0" stroke-width="2.3">
  <circle cx="10.2" cy="9.3" r="2.7"/><circle cx="10.2" cy="26.4" r="2.7"/><circle cx="25.8" cy="17.85" r="2.7"/>
  <path d="M10.2 12 V23.7 M11.2 12.2 Q13.5 17.85 19.5 17.85 H23.1"/>
 </g>
</svg>
<div class="t" style="left:1337px;top:101.50px;font-size:26px;line-height:26px;color:#1d1b16;letter-spacing:0.75px;-webkit-text-stroke:0.3px #1d1b16">Merged</div>
<svg width="36.00" height="36.00" viewBox="0 0 36 36" style="left:1212px;top:152.30px">
 <g fill="none" stroke="#448361" stroke-width="2.3">
  <circle cx="10.5" cy="9.6" r="2.7"/><circle cx="10.5" cy="26.3" r="2.7"/><circle cx="26.4" cy="26.4" r="2.7"/>
  <path d="M10.5 12.3 V23.6 M26.4 23.7 V13.5 Q26.4 9.6 22.5 9.6 H19.5"/>
 </g>
 <path d="M17 9.6 L21.4 5.6 L21.4 13.6 Z" fill="#448361" stroke="#448361" stroke-width="0.8" stroke-linejoin="round"/>
</svg>
<div class="t row gray" style="left:1252.5px;top:157.00px;letter-spacing:2.1px;-webkit-text-stroke:0.3px #787774;">#72824</div>
<div class="t row" style="left:1365.5px;top:157.00px;letter-spacing:0.75px;">PR #14962: [ROCm] Fix</div>
<div class="ul" style="left:1367px;top:185.00px;width:324px"></div>
<div class="t row" style="left:1216.5px;top:198.00px;letter-spacing:0.74px;">an issue with Softmax</div>
<div class="badge" style="left:1521.5px;top:193.50px;width:129px;height:35px"></div>
<svg width="29.88" height="29.88" viewBox="0 0 36 36" style="left:1534.1px;top:195.80px">
 <g fill="none" stroke="#448361" stroke-width="2.3">
  <circle cx="10.5" cy="9.6" r="2.7"/><circle cx="10.5" cy="26.3" r="2.7"/><circle cx="26.4" cy="26.4" r="2.7"/>
  <path d="M10.5 12.3 V23.6 M26.4 23.7 V13.5 Q26.4 9.6 22.5 9.6 H19.5"/>
 </g>
 <path d="M17 9.6 L21.4 5.6 L21.4 13.6 Z" fill="#448361" stroke="#448361" stroke-width="0.8" stroke-linejoin="round"/>
</svg>
<div class="t" style="left:1569.9px;top:197.20px;font-size:26px;line-height:26px;color:#1d1b16;letter-spacing:0.4px;-webkit-text-stroke:0.3px #1d1b16">Open</div>
</div>
<div class="gl" style="left:192px;top:1136px;width:1536px;height:2px"></div>
<div class="a" style="left:1815px;top:1094.5px;width:73px;height:73px;border-radius:50%;background:#fff;box-shadow:0 0 0 1.5px #e9e9e7,0 4px 14px rgba(0,0,0,0.05)"></div>
<svg width="73" height="73" viewBox="0 0 73 73" style="left:1815px;top:1094.5px">
 <g fill="none" stroke="#1a1a1a" stroke-width="3.2" stroke-linecap="butt">
  <path d="M22.5 24.5 Q32 15 39 23.5"/>
  <path d="M38.5 24 Q47.5 15.5 55 24.5"/>
  <path d="M39.5 23 L25 54 L40 55.5" stroke-linejoin="miter"/>
 </g>
 <circle cx="31.2" cy="30" r="2.8" fill="#1a1a1a"/>
 <circle cx="44.5" cy="32" r="2.8" fill="#1a1a1a"/>
</svg>
</div></body></html>
